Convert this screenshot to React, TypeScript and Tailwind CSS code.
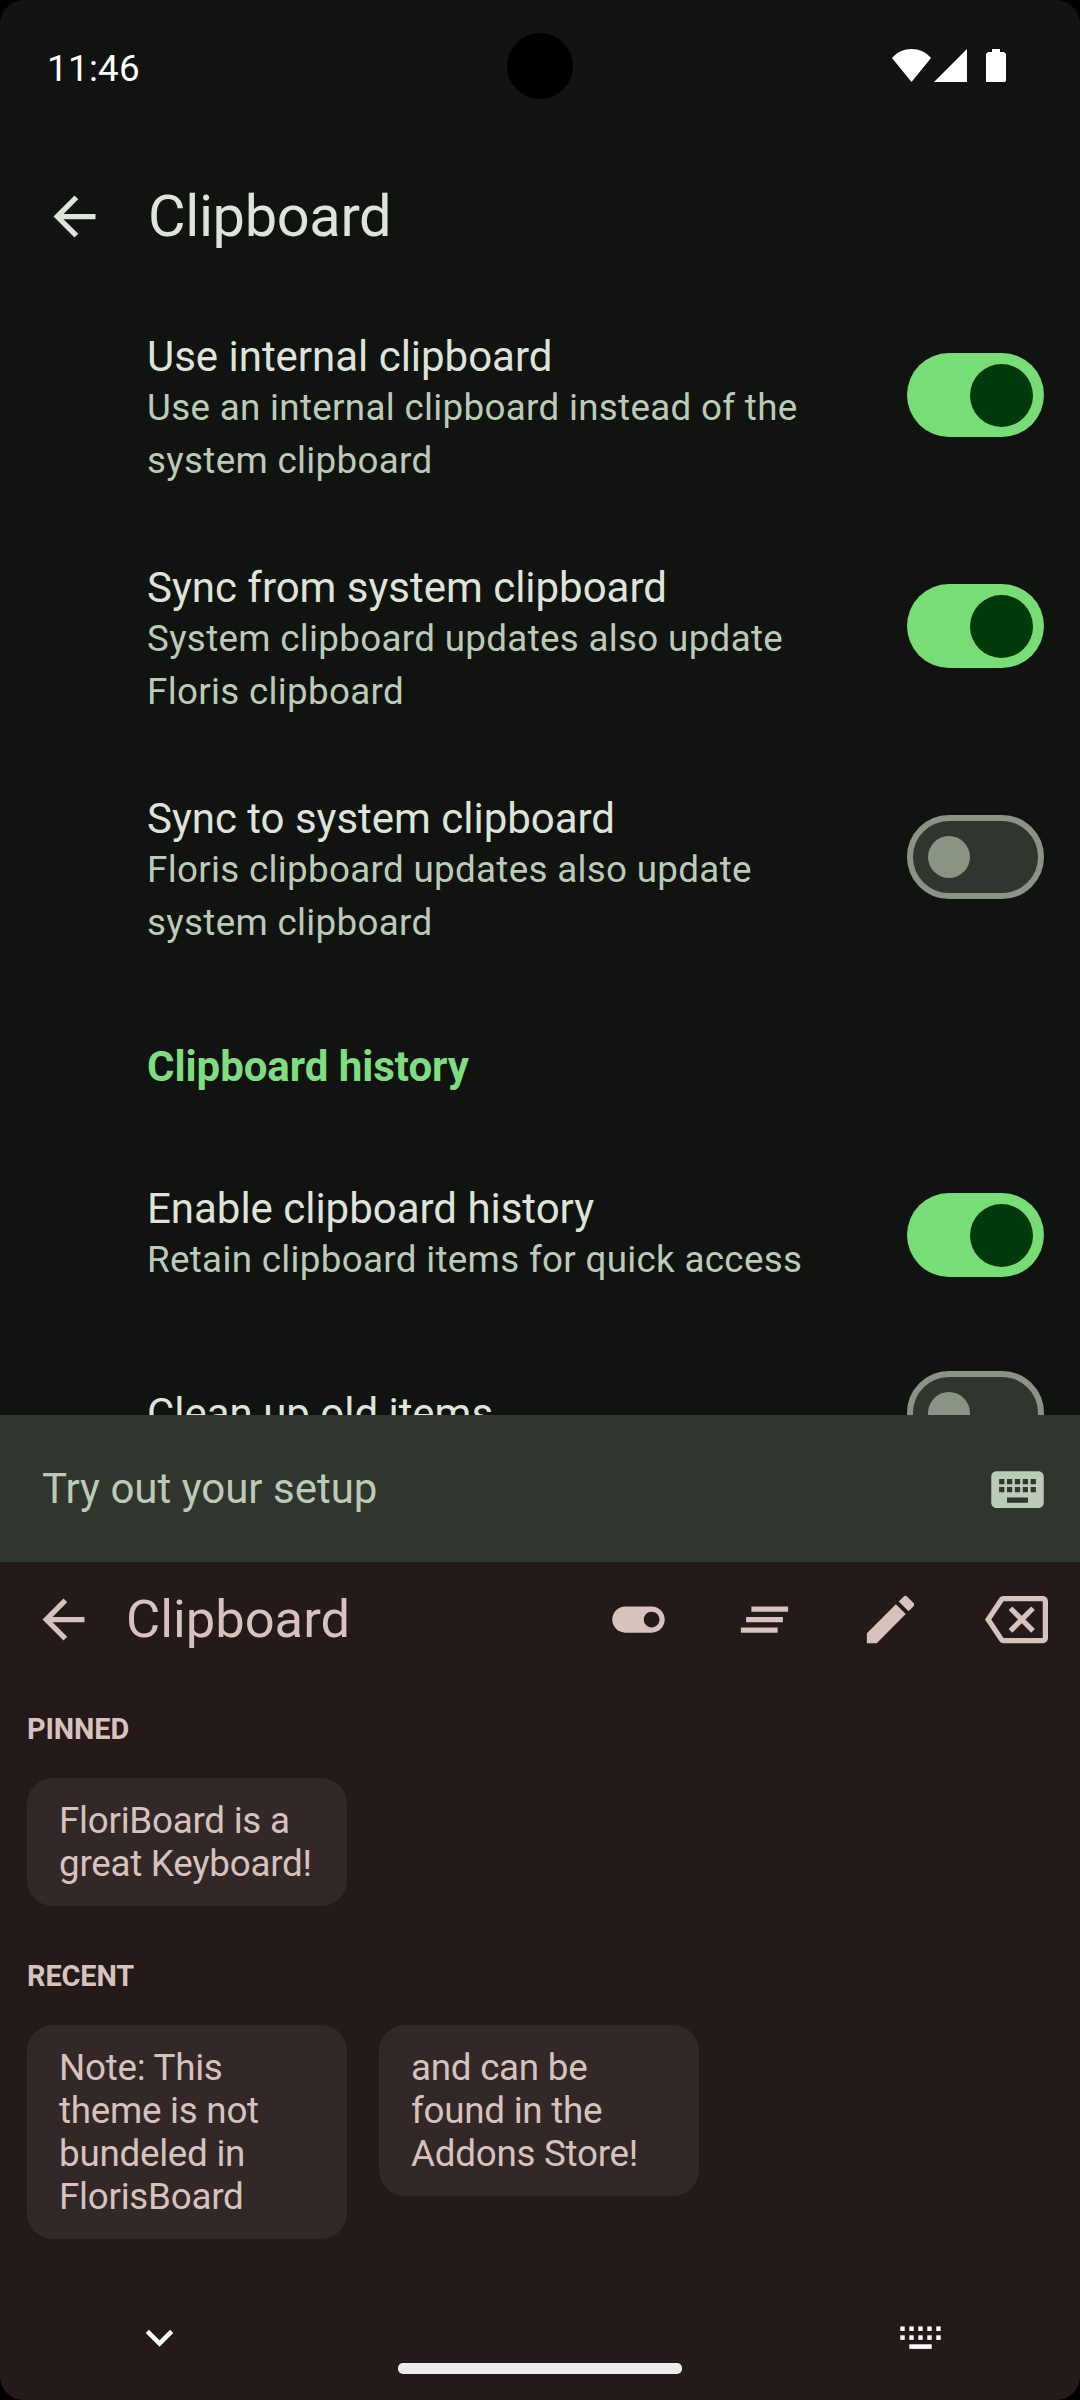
import React from 'react';

type IconProps = { d: string; className?: string };

function Icon({ d, className = '' }: IconProps) {
  return (
    <svg viewBox="0 0 24 24" fill="currentColor" className={`block shrink-0 ${className}`}>
      <path d={d} />
    </svg>
  );
}

const ARROW_BACK = 'M20 11H7.83l5.59-5.59L12 4l-8 8 8 8 1.41-1.41L7.83 13H20v-2z';
const KEYBOARD =
  'M20 5H4c-1.1 0-1.99.9-1.99 2L2 17c0 1.1.9 2 2 2h16c1.1 0 2-.9 2-2V7c0-1.1-.9-2-2-2zm-9 3h2v2h-2V8zm0 3h2v2h-2v-2zM8 8h2v2H8V8zm0 3h2v2H8v-2zm-1 2H5v-2h2v2zm0-3H5V8h2v2zm9 7H8v-2h8v2zm0-4h-2v-2h2v2zm0-3h-2V8h2v2zm3 3h-2v-2h2v2zm0-3h-2V8h2v2z';
const TOGGLE_ON =
  'M17 7H7c-2.76 0-5 2.24-5 5s2.24 5 5 5h10c2.76 0 5-2.24 5-5s-2.24-5-5-5zm0 8c-1.66 0-3-1.34-3-3s1.34-3 3-3 3 1.34 3 3-1.34 3-3 3z';
const CLEAR_ALL = 'M5 13h14v-2H5v2zm-2 4h14v-2H3v2zM7 7v2h14V7H7z';
const EDIT =
  'M3 17.25V21h3.75L17.81 9.94l-3.75-3.75L3 17.25zM20.71 7.04c.39-.39.39-1.02 0-1.41l-2.34-2.34c-.39-.39-1.02-.39-1.41 0l-1.83 1.83 3.75 3.75 1.83-1.83z';
const BACKSPACE =
  'M22 3H7c-.69 0-1.23.35-1.59.88L0 12l5.41 8.11c.36.53.9.89 1.59.89h15c1.1 0 2-.9 2-2V5c0-1.1-.9-2-2-2zm0 16H7.07L2.4 12l4.66-7H22v14zm-11.59-2L14 13.41 17.59 17 19 15.59 15.41 12 19 8.41 17.59 7 14 10.59 10.41 7 9 8.41 12.59 12 9 15.59z';
const EXPAND_MORE = 'M16.59 8.59L12 13.17 7.41 8.59 6 10l6 6 6-6z';

function StatusBar() {
  return (
    <div className="relative flex h-[132px] shrink-0 items-start justify-between pl-[47px] pr-[74px]">
      <span className="mt-[48px] text-[36.75px] leading-[42px] tracking-[0.3px] text-white">11:46</span>
      <div className="absolute left-[507px] top-[33px] size-[66px] rounded-full bg-black" />
      <div className="mt-[49px] flex text-white">
        <svg viewBox="0 0 39 33" className="h-[33px] w-[39px]" fill="currentColor">
          <path d="M0 9C5 3 12 0 19.5 0S34 3 39 9L19.5 33Z" />
        </svg>
        <svg viewBox="0 0 33 33" className="ml-[3px] h-[33px] w-[33px]" fill="currentColor">
          <path d="M33 0V33H0Z" />
        </svg>
        <svg viewBox="0 0 20 33" className="ml-[19px] h-[33px] w-[20px]" fill="currentColor">
          <path d="M6 0h8v3h4l2 2v27l-1 1H0V5l2-2h4Z" />
        </svg>
      </div>
    </div>
  );
}

function Switch({ on }: { on: boolean }) {
  return on ? (
    <div className="flex h-[84px] w-[137px] shrink-0 items-center justify-end rounded-full bg-[#78DC77] pr-[11px]">
      <div className="size-[63px] rounded-full bg-[#00390A]" />
    </div>
  ) : (
    <div className="flex h-[84px] w-[137px] shrink-0 items-center rounded-full border-[6px] border-[#8A9485] bg-[#30352E] pl-[15px]">
      <div className="size-[42px] rounded-full bg-[#8A9485]" />
    </div>
  );
}

type SettingProps = { title: string; lines?: string[]; on: boolean };

function Setting({ title, lines = [], on }: SettingProps) {
  const tall = lines.length > 1;
  return (
    <div
      className={`flex shrink-0 items-center justify-between pl-[147px] pr-[36px] ${tall ? 'h-[231px]' : 'h-[178px]'}`}
    >
      <div className={tall ? 'pt-[29px]' : ''}>
        <div className="text-[42px] leading-[49px] tracking-[-0.02px] text-[#DFE4DA]">{title}</div>
        {lines.length > 0 && (
          <div className="pb-px">
            {lines.map((l) => (
              <div
                key={l}
                className="whitespace-nowrap text-[36.75px] leading-[53px] tracking-[0.32px] text-[#BCCAB8]"
              >
                {l}
              </div>
            ))}
          </div>
        )}
      </div>
      <Switch on={on} />
    </div>
  );
}

function Clip({ lines }: { lines: string[] }) {
  return (
    <div className="w-[320px] rounded-[26px] bg-[#322827] px-[32px] py-[21px] text-[36.75px] leading-[43px] tracking-[-0.25px]">
      {lines.map((l) => (
        <div key={l} className="whitespace-nowrap">
          {l}
        </div>
      ))}
    </div>
  );
}

function MiniKeyboard() {
  return (
    <svg viewBox="0 0 41 24" className="h-[24px] w-[41px]" fill="currentColor">
      {[0, 9, 18, 27, 36].map((x) => (
        <g key={x}>
          <rect x={x + 0.3} y="0.4" width="4.4" height="4.6" />
          <rect x={x + 0.3} y="9.3" width="4.4" height="4.6" />
        </g>
      ))}
      <rect x="9.3" y="18.3" width="22.4" height="4.6" />
    </svg>
  );
}

export default function App() {
  return (
    <div className="h-[2400px] w-[1080px] bg-black">
      <div className="flex h-full flex-col overflow-hidden rounded-[24px] bg-[#10130F] font-[Roboto,sans-serif]">
        <div className="flex h-[1415px] shrink-0 flex-col overflow-hidden">
          <StatusBar />
          <header className="flex h-[147.5px] shrink-0 items-center pl-[42.5px] pt-[21.5px] text-[#DFE4DA]">
            <Icon d={ARROW_BACK} className="size-[63px]" />
            <h1 className="-mt-[2px] ml-[42.5px] text-[57.75px] leading-[68px] tracking-[-0.35px]">Clipboard</h1>
          </header>
          <Setting
            title="Use internal clipboard"
            lines={['Use an internal clipboard instead of the', 'system clipboard']}
            on
          />
          <Setting
            title="Sync from system clipboard"
            lines={['System clipboard updates also update', 'Floris clipboard']}
            on
          />
          <Setting
            title="Sync to system clipboard"
            lines={['Floris clipboard updates also update', 'system clipboard']}
            on={false}
          />
          <h2 className="h-[173.5px] shrink-0 pl-[147px] pt-[69px] text-[42px] font-bold leading-[49px] tracking-[-0.05px] text-[#80DC80]">
            Clipboard history
          </h2>
          <Setting title="Enable clipboard history" lines={['Retain clipboard items for quick access']} on />
          <Setting title="Clean up old items" on={false} />
        </div>

        <div className="flex h-[147px] shrink-0 items-center justify-between bg-[#30352E] pl-[42px] pr-[31px] text-[#BCCAB8]">
          <span className="text-[42px] leading-[50px]">Try out your setup</span>
          <Icon d={KEYBOARD} className="mt-[2px] size-[63px]" />
        </div>

        <div className="flex flex-1 flex-col bg-[#231A19] text-[#D8C2BE]">
          <div className="flex h-[115px] shrink-0 items-center pl-[32px] pr-[32px]">
            <Icon d={ARROW_BACK} className="size-[63px]" />
            <span className="-mt-[2px] ml-[31px] text-[52.5px] leading-[62px]">Clipboard</span>
            <div className="ml-auto flex gap-[63px]">
              <Icon d={TOGGLE_ON} className="size-[63px]" />
              <Icon d={CLEAR_ALL} className="size-[63px]" />
              <Icon d={EDIT} className="size-[63px]" />
              <Icon d={BACKSPACE} className="size-[63px]" />
            </div>
          </div>

          <section className="px-[27px] pt-[35px]">
            <h3 className="text-[28.875px] font-bold leading-[34px] tracking-[-0.1px]">PINNED</h3>
            <div className="mt-[32px] flex">
              <Clip lines={['FloriBoard is a', 'great Keyboard!']} />
            </div>
          </section>
          <section className="px-[27px] pt-[53px]">
            <h3 className="text-[28.875px] font-bold leading-[34px] tracking-[-0.1px]">RECENT</h3>
            <div className="mt-[32px] flex items-start gap-[32px]">
              <Clip lines={['Note: This', 'theme is not', 'bundeled in', 'FlorisBoard']} />
              <Clip lines={['and can be', 'found in the', 'Addons Store!']} />
            </div>
          </section>

          <div className="mt-auto grid h-[90px] grid-cols-[398px_284px_1fr] items-start text-white">
            <Icon d={EXPAND_MORE} className="ml-[132px] size-[55px]" />
            <div className="mt-[53px] h-[11px] rounded-[5px] bg-[#ECECEC]" />
            <div className="ml-[218px] mt-[16px]">
              <MiniKeyboard />
            </div>
          </div>
        </div>
      </div>
    </div>
  );
}
